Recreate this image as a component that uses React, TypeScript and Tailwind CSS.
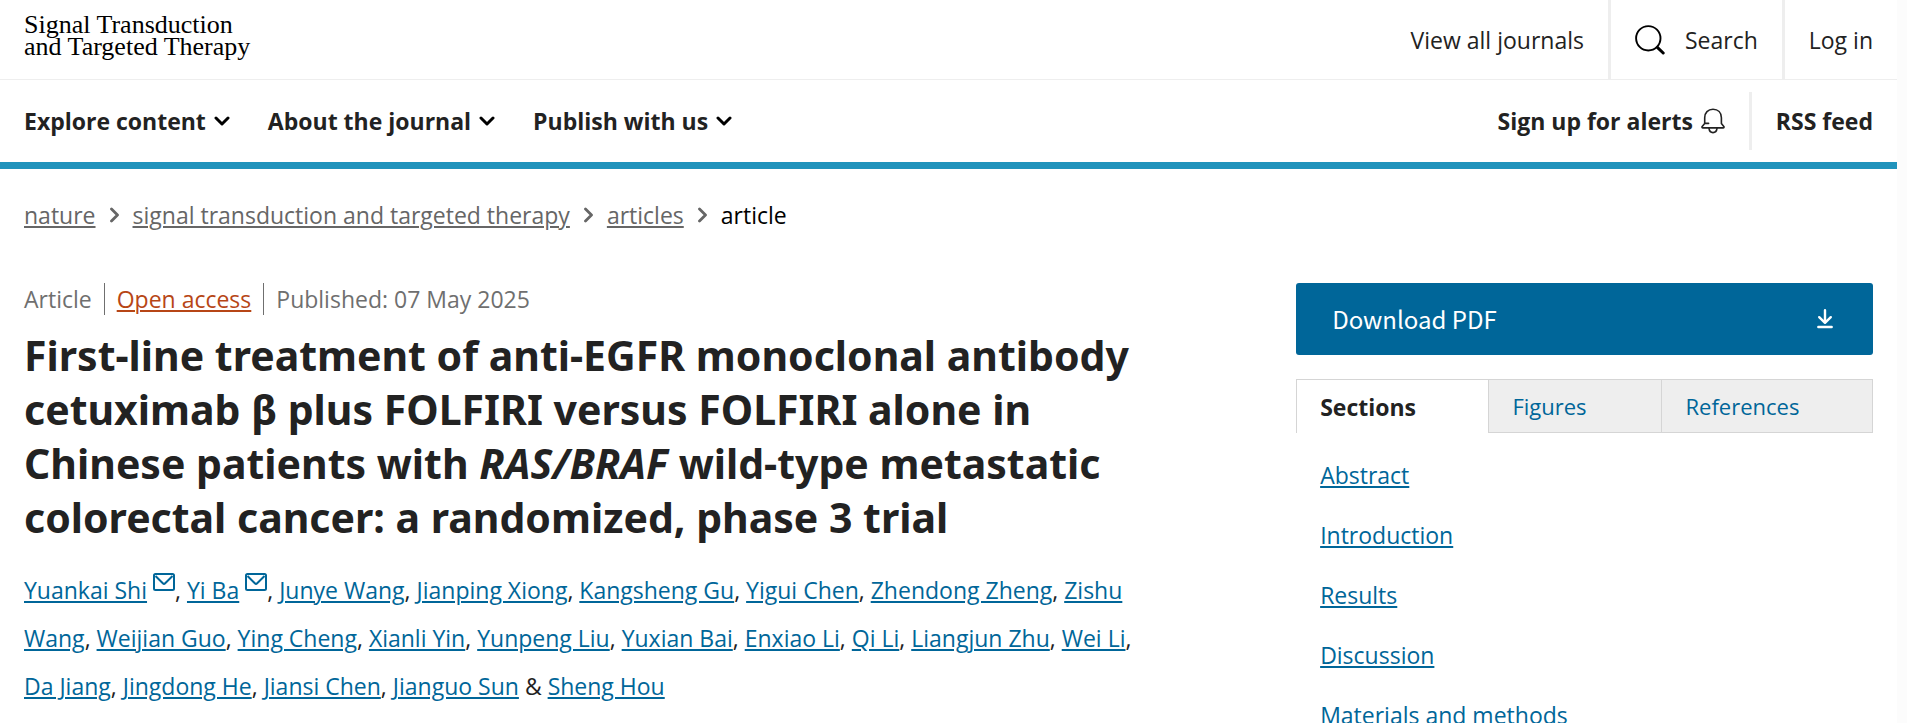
import { Fragment } from 'react';

const navItems = ['Explore content', 'About the journal', 'Publish with us'];

const crumbs = ['nature', 'signal transduction and targeted therapy', 'articles'];

const authors: { name: string; mail?: boolean }[] = [
  { name: 'Yuankai Shi', mail: true },
  { name: 'Yi Ba', mail: true },
  { name: 'Junye Wang' },
  { name: 'Jianping Xiong' },
  { name: 'Kangsheng Gu' },
  { name: 'Yigui Chen' },
  { name: 'Zhendong Zheng' },
  { name: 'Zishu Wang' },
  { name: 'Weijian Guo' },
  { name: 'Ying Cheng' },
  { name: 'Xianli Yin' },
  { name: 'Yunpeng Liu' },
  { name: 'Yuxian Bai' },
  { name: 'Enxiao Li' },
  { name: 'Qi Li' },
  { name: 'Liangjun Zhu' },
  { name: 'Wei Li' },
  { name: 'Da Jiang' },
  { name: 'Jingdong He' },
  { name: 'Jiansi Chen' },
  { name: 'Jianguo Sun' },
  { name: 'Sheng Hou' },
];

const sections = ['Abstract', 'Introduction', 'Results', 'Discussion', 'Materials and methods'];

function ChevronDown() {
  return (
    <svg className="h-[10px] w-4" viewBox="0 0 16 10" fill="none" stroke="#000" strokeWidth="3" strokeLinecap="round" strokeLinejoin="round" aria-hidden="true">
      <path d="M2 2l6 6 6-6" />
    </svg>
  );
}

function ChevronRight() {
  return (
    <svg className="mx-[14px] h-4 w-[9px]" viewBox="0 0 9 16" fill="none" stroke="currentColor" strokeWidth="2.8" strokeLinecap="round" strokeLinejoin="round" aria-hidden="true">
      <path d="M1.5 2l6 6-6 6" />
    </svg>
  );
}

function SearchIcon() {
  return (
    <svg className="h-[30px] w-[30px]" viewBox="0 0 30 30" fill="none" stroke="#000" aria-hidden="true">
      <circle cx="13.3" cy="13.3" r="12.2" strokeWidth="1.9" />
      <path d="M22 22l1 1" strokeWidth="1.9" />
      <path d="M22.6 22.6l5.6 5.4" strokeWidth="3" strokeLinecap="round" />
    </svg>
  );
}

function BellIcon() {
  return (
    <svg className="h-[26px] w-6" viewBox="0 0 24 26" fill="none" stroke="currentColor" strokeWidth="1.6" strokeLinecap="round" strokeLinejoin="round" aria-hidden="true">
      <path d="M7.6 15.4H3.7V9.8C3.7 4.6 7 1.3 12 1.3s8.4 3.3 8.4 8.5v5.6l2.4 3c.5.8.2 1.5-.7 1.5H1.9c-.9 0-1.2-.7-.7-1.5l2.5-3" />
      <path d="M8 20.4c.3 2.6 1.9 4.2 4 4.2s3.7-1.6 4-4.2" />
    </svg>
  );
}

function MailIcon() {
  return (
    <svg className="h-[18px] w-[22px]" viewBox="0 0 22 18" fill="none" stroke="currentColor" strokeWidth="2" strokeLinejoin="round" aria-hidden="true">
      <rect x="1" y="1" width="20" height="16" rx="1.5" />
      <path d="M2.5 3l7.3 7.3c.7.7 1.7.7 2.4 0L19.5 3" />
    </svg>
  );
}

function DownloadIcon() {
  return (
    <svg className="h-5 w-4" viewBox="0 0 16 20" fill="none" stroke="currentColor" strokeLinecap="round" strokeLinejoin="round" aria-hidden="true">
      <path d="M8 1.2v12M2.2 8.2L8 13.8l5.800-5.600" strokeWidth="2.4" />
      <path d="M1.400 18h13.200" strokeWidth="2.600" />
    </svg>
  );
}

export default function App() {
  return (
    <div className="flex h-screen overflow-hidden bg-white font-['Open_Sans','Noto_Sans',sans-serif] text-[23px] leading-8 text-[#222222]">
      <div className="min-w-0 flex-1">
        <header>
          <div className="flex h-20 justify-between border-b border-[#eeeeee] px-6">
            <a href="#home" className="pt-[14px] font-['Liberation_Serif',serif] text-[26px] leading-[22px] text-black">
              Signal Transduction
              <br />
              and Targeted Therapy
            </a>
            <div className="flex items-stretch">
              <a href="#journals" className="flex items-center pr-6">View all journals</a>
              <button type="button" className="flex items-center gap-5 border-x-3 border-[#eeeeee] px-6">
                <SearchIcon />
                Search
              </button>
              <a href="#login" className="flex items-center pl-6">Log in</a>
            </div>
          </div>
          <nav className="flex h-[89px] items-center justify-between border-b-7 border-[#2093bc] px-6 font-bold">
            <div className="flex gap-[38px]">
              {navItems.map((item) => (
                <button key={item} type="button" className="flex items-center gap-2">
                  {item}
                  <ChevronDown />
                </button>
              ))}
            </div>
            <div className="flex items-center">
              <a href="#alerts" className="flex items-center gap-2 pr-6">
                Sign up for alerts
                <BellIcon />
              </a>
              <a href="#rss" className="flex h-[58px] items-center border-l-3 border-[#eeeeee] pl-6">RSS feed</a>
            </div>
          </nav>
        </header>

        <nav className="flex items-center px-6 pt-[30px] text-[#666666]" aria-label="Breadcrumbs">
          {crumbs.map((crumb) => (
            <Fragment key={crumb}>
              <a href="#crumb" className="underline decoration-2 underline-offset-2">{crumb}</a>
              <ChevronRight />
            </Fragment>
          ))}
          <span className="text-black">article</span>
        </nav>

        <div className="flex items-start justify-between px-6 pt-[52px]">
          <main className="w-[61%]">
            <ul className="flex text-[#6f6f6f]">
              <li className="border-r border-[#6f6f6f] pr-3">Article</li>
              <li className="border-r border-[#6f6f6f] px-3">
                <a href="#open-access" className="text-[#b74616] underline decoration-2 underline-offset-2">Open access</a>
              </li>
              <li className="pl-3">Published: 07 May 2025</li>
            </ul>
            <h1 className="mt-[13px] font-['Noto_Sans','Open_Sans',sans-serif] text-[41px] leading-[54px] font-bold">
              First-line treatment of anti-EGFR monoclonal antibody cetuximab β plus FOLFIRI versus FOLFIRI alone in Chinese patients with <i>RAS/BRAF</i> wild-type metastatic colorectal cancer: a randomized, phase 3 trial
            </h1>
            <p className="mt-[22px] leading-[48px]">
              {authors.map(({ name, mail }, i) => (
                <Fragment key={name}>
                  <a href="#author" className="text-[#006699]">
                    <span className="underline decoration-2 underline-offset-2">{name}</span>
                    {mail && (
                      <span className="ml-[6px] inline-block pb-2 align-baseline leading-none">
                        <MailIcon />
                      </span>
                    )}
                  </a>
                  {i < authors.length - 2 ? ', ' : i === authors.length - 2 ? ' & ' : ''}
                </Fragment>
              ))}
            </p>
          </main>

          <aside className="w-[31.2%]">
            <a href="#pdf" className="flex h-[72px] items-center justify-between rounded-[3px] bg-[#006699] pr-10 pl-9 font-['Noto_Sans_CJK_SC','Noto_Sans',sans-serif] text-[24px] text-white">
              Download PDF
              <DownloadIcon />
            </a>
            <div className="mt-6 flex h-[54px] text-[22px] text-[#006699]" role="tablist">
              <button type="button" role="tab" aria-selected="true" className="flex w-1/3 items-center border-t border-l border-[#d5d5d5] px-[23px] text-[23px] font-bold text-[#222222]">
                Sections
              </button>
              <button type="button" role="tab" aria-selected="false" className="flex w-[30%] items-center border-y border-l border-[#d5d5d5] bg-[#eeeeee] px-[23px]">
                Figures
              </button>
              <button type="button" role="tab" aria-selected="false" className="flex flex-1 items-center border border-[#d5d5d5] bg-[#eeeeee] px-[23px]">
                References
              </button>
            </div>
            <ul className="mt-3 px-6 leading-[60px] text-[#006699]">
              {sections.map((section) => (
                <li key={section}>
                  <a href="#section" className="underline decoration-2 underline-offset-2">{section}</a>
                </li>
              ))}
            </ul>
          </aside>
        </div>
      </div>
      <div className="w-[10px] shrink-0 bg-[#fcfcfc]" />
    </div>
  );
}
